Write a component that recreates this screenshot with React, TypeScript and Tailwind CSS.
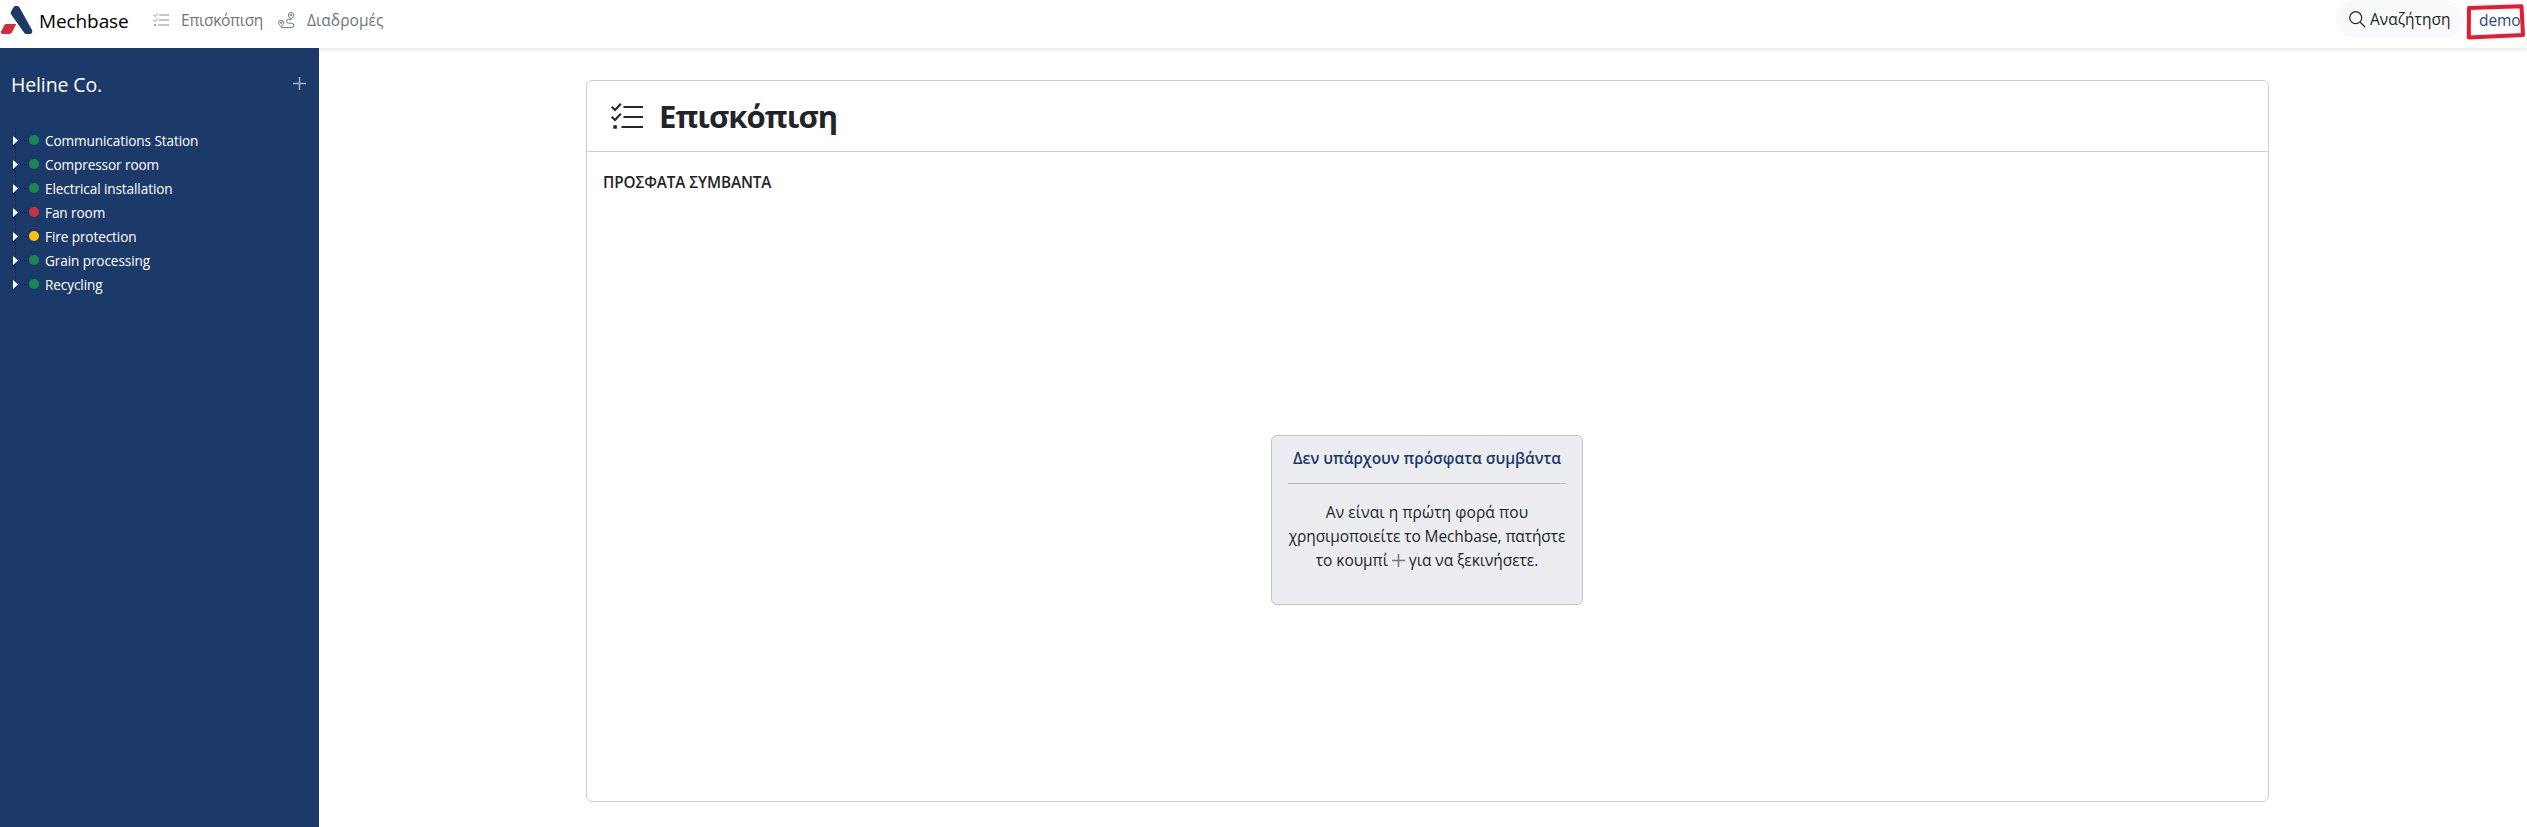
const stations = [
  { name: "Communications Station", color: "bg-[#198754]" },
  { name: "Compressor room", color: "bg-[#198754]" },
  { name: "Electrical installation", color: "bg-[#198754]" },
  { name: "Fan room", color: "bg-[#cf2f3c]" },
  { name: "Fire protection", color: "bg-[#ffc107]" },
  { name: "Grain processing", color: "bg-[#198754]" },
  { name: "Recycling", color: "bg-[#198754]" },
];

function Logo() {
  return (
    <svg width="34" height="36" viewBox="0 0 34 36" className="shrink-0">
      <path d="M15.3 6H17.4Q18.8 6.1 19.6 7.6L32 30Q33.2 33.4 30 34H26.3Q25 34 24 32.4L11 14.2Q10.2 12.9 11 11.7L13.5 7.2Q14.2 6 15.3 6Z" fill="#1c3a69" />
      <path d="M6.4 24H16.3L11.9 32.6Q11.1 34 9.6 34H2.6Q.3 33.8 .9 31.8L4.2 25.4Q4.9 24 6.4 24Z" fill="#cf2f3c" />
    </svg>
  );
}

function Checklist({ className }: { className: string }) {
  return (
    <svg viewBox="0 0 32 26" className={className} fill="none" stroke="currentColor" strokeWidth="2">
      <path d="M12.5 4H32M12.5 14H32M10.5 24H32" />
      <path d="M.7 3.7L4 7L9.8 .8M.7 13.7L4 17L9.8 10.8" />
      <rect x="2.3" y="22.2" width="3.6" height="3.6" rx=".6" fill="currentColor" stroke="none" />
    </svg>
  );
}

function RouteIcon() {
  return (
    <svg width="17" height="17" viewBox="0 0 17 17" fill="none" stroke="currentColor" strokeWidth="1">
      <path d="M3 14.8C1.4 13 .6 11.8 .6 10.7a2.5 2.5 0 0 1 5 0C5.6 11.8 4.6 13 3 14.8Z" />
      <circle cx="3.1" cy="10.7" r=".8" />
      <path d="M13 7.3C11.4 5.5 10.4 4.3 10.4 3.1a2.600 2.600 0 0 1 5.200 0C15.600 4.300 14.600 5.500 13 7.300Z" />
      <circle cx="13" cy="3.1" r=".8" />
      <path d="M13 7.500H10.400a1.700 1.700 0 0 0 0 3.700H13.600a2.200 2.200 0 0 1 0 4.400H3.200" />
    </svg>
  );
}

function Plus({ className }: { className: string }) {
  return (
    <svg width="13" height="13" viewBox="0 0 13 13" className={className} fill="none" stroke="currentColor" strokeWidth="1.5">
      <path d="M0 6.5H13M6.5 0V13" />
    </svg>
  );
}

function Header() {
  return (
    <header className="relative flex h-12 shrink-0 items-start bg-white shadow-[0_2px_4px_rgba(0,0,0,0.1)]">
      <Logo />
      <span className="ml-[5px] mt-[5px] w-[114px] text-[19px] leading-8 tracking-[-0.1px] text-black">Mechbase</span>
      <nav className="mt-2 flex text-[15.5px] leading-6 text-[#6c757d]">
        <a className="flex">
          <Checklist className="mt-[5px] h-[13px] w-4 opacity-80" />
          <span className="ml-3 w-[96px] tracking-[-0.32px]">Επισκόπιση</span>
        </a>
        <a className="flex">
          <span className="mt-1 w-[30px] pl-px"><RouteIcon /></span>
          <span className="tracking-[0.05px]">Διαδρομές</span>
        </a>
      </nav>
      <button className="ml-auto flex h-[38px] w-[127px] rounded-full bg-[#f8f9fa] pl-[13px] pt-[7px] text-[15.5px] leading-6 text-[#212529]">
        <svg width="17" height="17" viewBox="0 0 17 17" className="mt-[4px]" fill="none" stroke="currentColor" strokeWidth="1.2">
          <circle cx="6.7" cy="6.7" r="6" />
          <path d="M11 11L16 16" />
        </svg>
        <span className="ml-1">Αναζήτηση</span>
      </button>
      <a className="ml-4 mt-2 w-12 text-[15.5px] leading-6 tracking-[-0.1px] text-[#2c4a7c]">demo</a>
      <svg className="absolute right-0 top-0" width="64" height="42" viewBox="0 0 64 42" fill="none" stroke="#e81a31" strokeWidth="4" strokeLinejoin="round">
        <path d="M6 8L58.500 6.200L60 35L5.800 37.500Z" />
      </svg>
    </header>
  );
}

function Sidebar() {
  return (
    <aside className="relative w-[319px] shrink-0 bg-[#1c3a69] text-white">
      <div className="flex h-20 items-start pl-[11px] pr-[13px] pt-[21px]">
        <h2 className="text-[19.5px] leading-8 tracking-[-0.13px]">Heline Co.</h2>
        <Plus className="ml-auto mt-2 text-[#a3afc2]" />
      </div>
      <ul className="ml-[15px] h-[157px] border-l border-dotted border-[#14243f]">
        {stations.map((s) => (
          <li key={s.name} className="-ml-[3px] flex h-6 items-center">
            <svg width="5" height="9" viewBox="0 0 5 9" className="relative">
              <path d="M0 0L5 4.500L0 9Z" fill="#fff" />
            </svg>
            <span className="w-[11px] border-t border-dotted border-[#14243f]" />
            <span className={`size-2.5 rounded-full ${s.color}`} />
            <span className="ml-1.5 whitespace-nowrap pt-0.5 text-[13.6px] font-medium leading-[22px] tracking-[-0.1px]">{s.name}</span>
          </li>
        ))}
      </ul>
    </aside>
  );
}

function Notice() {
  return (
    <div className="h-[170px] w-[312px] rounded-md border border-[#c1c3c7] bg-[#ecedf1] px-4 pt-[10px] text-center text-[15.5px] leading-6 text-[#212529]">
      <p className="whitespace-nowrap font-semibold tracking-[-0.04px] text-[#1c3a69]">Δεν υπάρχουν πρόσφατα συμβάντα</p>
      <hr className="mb-4 mt-[13px] border-[#b6b9bf]" />
      <p className="whitespace-nowrap tracking-[0.1px]">Αν είναι η πρώτη φορά που</p>
      <p className="whitespace-nowrap tracking-[-0.1px]">χρησιμοποιείτε το Mechbase, πατήστε</p>
      <p className="whitespace-nowrap tracking-[-0.05px]">
        το κουμπί <Plus className="inline align-[-1px] text-[#75797f]" /> για να ξεκινήσετε.
      </p>
    </div>
  );
}

export default function App() {
  return (
    <div className="flex h-[827px] w-full flex-col overflow-hidden bg-white font-['Open_Sans','Noto_Sans',sans-serif]">
      <Header />
      <div className="flex min-h-0 flex-1">
        <Sidebar />
        <main className="pl-[267px] pt-8">
          <section className="flex h-[722px] w-[1683px] flex-col rounded-md border border-[#cfcfcf]">
            <div className="flex h-[71px] shrink-0 border-b border-[#cfcfcf] pl-6 pt-[22px] text-[#212529]">
              <Checklist className="h-[26px] w-8" />
              <h1 className="-mt-[6px] ml-4 text-[31px] font-bold leading-[38px] tracking-[-0.95px]">Επισκόπιση</h1>
            </div>
            <h3 className="ml-[16px] mt-[18px] text-[15.3px] font-semibold leading-6 tracking-[-0.1px] text-[#212529]">ΠΡΟΣΦΑΤΑ ΣΥΜΒΑΝΤΑ</h3>
            <div className="mt-[241px] flex justify-center pr-px">
              <Notice />
            </div>
          </section>
        </main>
      </div>
    </div>
  );
}
